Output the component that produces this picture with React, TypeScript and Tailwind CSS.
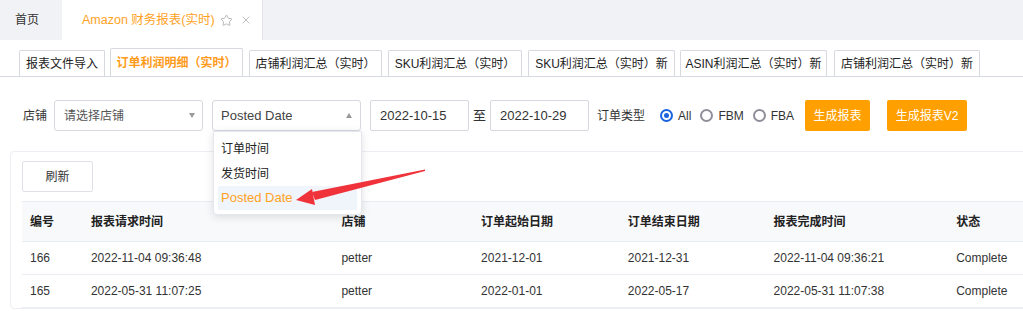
import { X, Star } from "lucide-react";

const subTabs = [
  { label: "报表文件导入", w: "w-[86px]", gap: "" },
  { label: "订单利润明细（实时）", w: "w-[133px]", gap: "ml-[5px]", active: true },
  { label: "店铺利润汇总（实时）", w: "w-[133px]", gap: "ml-[6px]" },
  { label: "SKU利润汇总（实时）", w: "w-[134px]", gap: "ml-[6px]" },
  { label: "SKU利润汇总（实时）新", w: "w-[147px]", gap: "ml-[6px]" },
  { label: "ASIN利润汇总（实时）新", w: "w-[147px]", gap: "ml-[5px]" },
  { label: "店铺利润汇总（实时）新", w: "w-[146px]", gap: "ml-[7px]" },
];

const rows = [
  ["166", "2022-11-04 09:36:48", "petter", "2021-12-01", "2021-12-31", "2022-11-04 09:36:21", "Complete"],
  ["165", "2022-05-31 11:07:25", "petter", "2022-01-01", "2022-05-17", "2022-05-31 11:07:38", "Complete"],
];

const headers = ["编号", "报表请求时间", "店铺", "订单起始日期", "订单结束日期", "报表完成时间", "状态"];
const colW = ["w-[61px]", "w-[251px]", "w-[140px]", "w-[147px]", "w-[146px]", "w-[183px]", "w-[90px]"];

function Radio({ label, checked }: { label: string; checked?: boolean }) {
  return (
    <label className="flex items-center gap-[5px]">
      {checked ? (
        <span className="flex h-[13px] w-[13px] items-center justify-center rounded-full border-2 border-[#1b64e0]">
          <span className="h-[5px] w-[5px] rounded-full bg-[#1b64e0]" />
        </span>
      ) : (
        <span className="h-[13px] w-[13px] rounded-full border-2 border-[#8f8f9a]" />
      )}
      <span className="text-[12px] text-[#333]">{label}</span>
    </label>
  );
}

export default function App() {
  return (
    <div className="relative h-[311px] w-[1023px] overflow-hidden bg-white font-['Liberation_Sans','Noto_Sans_CJK_SC',sans-serif] text-[#333]">
      {/* top page tabs */}
      <div className="flex h-[40px] bg-[#f1f2f5]">
        <div className="flex w-[62px] items-center pl-[15px] text-[12px] text-[#333]">首页</div>
        <div className="flex w-[201px] items-center border-r border-[#e3e5ea] bg-white pl-[20px] text-[12.5px] text-[#ffa21f]">
          <span>Amazon 财务报表(实时)</span>
          <Star className="ml-[5px] h-[13px] w-[13px] text-[#aaa]" strokeWidth={1.5} />
          <X className="ml-[7px] h-[12px] w-[12px] text-[#aaa]" strokeWidth={1.5} />
        </div>
      </div>

      {/* sub tabs */}
      <div className="mt-[9px] flex h-[28px] items-end border-b border-[#d6d9df] pl-[19px]">
        {subTabs.map((t) => (
          <div
            key={t.label}
            className={`${t.w} ${t.gap} flex items-center justify-center rounded-t-[2px] border border-b-0 border-[#d6d9df] bg-white text-[12px] ${
              t.active ? "h-[28px] font-bold text-[#ff9b1a]" : "h-[26px] text-[#222]"
            }`}
          >
            {t.label}
          </div>
        ))}
      </div>

      {/* filter row */}
      <div className="mt-[23px] flex h-[31px] items-center pl-[23px] text-[12px]">
        <span className="mr-[7px]">店铺</span>
        <div className="flex h-[31px] w-[149px] items-center justify-between rounded-[3px] border border-[#d6d9df] pl-[9px] pr-[7px] text-[#555]">
          <span>请选择店铺</span>
          <span className="h-0 w-0 border-x-[3px] border-t-[5px] border-x-transparent border-t-[#999]" />
        </div>
        <div className="relative ml-[9px] flex h-[31px] w-[149px] items-center justify-between rounded-[3px] border border-[#d6d9df] pl-[8px] pr-[8px] text-[13px] text-[#444]">
          <span>Posted Date</span>
          <span className="h-0 w-0 border-x-[3px] border-b-[5px] border-x-transparent border-b-[#999]" />
        </div>
        <div className="ml-[9px] flex h-[31px] w-[99px] items-center rounded-[2px] border border-[#d6d9df] pl-[9px] text-[13px]">2022-10-15</div>
        <span className="mx-[4px] text-[13px]">至</span>
        <div className="flex h-[31px] w-[99px] items-center rounded-[2px] border border-[#d6d9df] pl-[9px] text-[13px]">2022-10-29</div>
        <span className="ml-[8px] mr-[15px]">订单类型</span>
        <div className="flex items-center gap-[9px]">
          <Radio label="All" checked />
          <Radio label="FBM" />
          <Radio label="FBA" />
        </div>
        <button className="ml-[11px] h-[31px] w-[65px] rounded-[2px] bg-[#ffa000] text-[12px] text-white">生成报表</button>
        <button className="ml-[17px] h-[31px] w-[80px] rounded-[2px] bg-[#ffa000] text-[12px] text-white">生成报表V2</button>
      </div>

      {/* card */}
      <div className="ml-[10px] mt-[20px] w-[1040px] rounded-[4px] border border-[#eceef3] px-[11px] pt-[9px]">
        <button className="h-[31px] w-[71px] rounded-[2px] border border-[#dfe1e6] bg-white text-[12px] text-[#333]">刷新</button>
        <div className="mt-[9px] border-t border-[#e9ecf2]">
          <div className="flex h-[40px] items-center border-b border-[#e9ecf2] bg-[#f8f9fb] text-[12px] font-bold text-[#222]">
            {headers.map((h, i) => (
              <div key={h} className={`${colW[i]} pl-[8px]`}>{h}</div>
            ))}
          </div>
          {rows.map((r) => (
            <div key={r[0]} className="flex h-[33px] items-center border-b border-[#e9ecf2] text-[12px] text-[#333]">
              {r.map((c, i) => (
                <div key={i} className={`${colW[i]} pl-[8px]`}>{c}</div>
              ))}
            </div>
          ))}
        </div>
      </div>

      {/* dropdown menu */}
      <div className="absolute left-[213px] top-[131px] w-[149px] rounded-b-[4px] border border-[#e4e7ed] bg-white px-[4px] pb-[4px] pt-[4px] text-[12px] shadow-[0_2px_8px_rgba(0,0,0,0.12)]">
        <div className="flex h-[25px] items-center pl-[3px] text-[#222]">订单时间</div>
        <div className="flex h-[25px] items-center pl-[3px] text-[#222]">发货时间</div>
        <div className="flex h-[24px] items-center bg-[#f0f4fb] pl-[3px] text-[13px] text-[#ffa21f]">Posted Date</div>
      </div>

      {/* red arrow */}
      <svg className="absolute left-0 top-0" width="1023" height="311" viewBox="0 0 1023 311">
        <polygon points="296,200 312,189 315,205" fill="#f0333a" />
        <polygon points="425,169.5 312,192 315,200 425,171" fill="#f0333a" />
      </svg>
    </div>
  );
}
